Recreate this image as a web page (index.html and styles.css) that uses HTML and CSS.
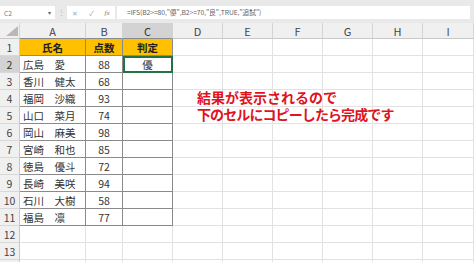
FILE: index.html
```html
<!DOCTYPE html>
<html lang="ja">
<head>
    <meta charset="UTF-8">
    <title>IFS関数</title>
    <link rel="stylesheet" href="styles.css">
</head>
<body>
    <div class="fbar">
        <div class="namebox"><span>C2</span><span class="arrow">▾</span></div>
        <div class="dots">⋮</div>
        <div class="fbtns"><span>✕</span><span>✓</span><span class="fx">fx</span></div>
        <div class="formula">=IFS(B2&gt;=80,"優",B2&gt;=70,"良",TRUE,"追試")</div>
    </div>

    <table class="sheet">
        <colgroup>
            <col class="c-rh"><col class="c-a"><col class="c-b"><col class="c-c">
            <col class="c-n"><col class="c-n"><col class="c-n"><col class="c-n"><col class="c-n"><col class="c-last">
        </colgroup>
        <tr class="colhead">
            <th class="corner"><svg width="20" height="15" viewBox="0 0 20 15"><polygon points="18,3 18,13 6,13" fill="#b8b8b8"/></svg></th>
            <th class="tb">A</th><th class="tb">B</th><th class="tb sel">C</th>
            <th>D</th><th>E</th><th>F</th><th>G</th><th>H</th><th>I</th>
        </tr>
        <tr>
            <th class="rh">1</th>
            <td class="t head">氏名</td><td class="t head">点数</td><td class="t head">判定</td>
            <td></td><td></td><td></td><td></td><td></td><td></td>
        </tr>
        <tr>
            <th class="rh sel">2</th>
            <td class="t name">広島　愛</td><td class="t num">88</td><td class="t num active">優</td>
            <td></td><td></td><td></td><td></td><td></td><td></td>
        </tr>
        <tr>
            <th class="rh">3</th>
            <td class="t name">香川　健太</td><td class="t num">68</td><td class="t"></td>
            <td></td><td></td><td></td><td></td><td></td><td></td>
        </tr>
        <tr>
            <th class="rh">4</th>
            <td class="t name">福岡　沙織</td><td class="t num">93</td><td class="t"></td>
            <td></td><td></td><td></td><td></td><td></td><td></td>
        </tr>
        <tr>
            <th class="rh">5</th>
            <td class="t name">山口　菜月</td><td class="t num">74</td><td class="t"></td>
            <td></td><td></td><td></td><td></td><td></td><td></td>
        </tr>
        <tr>
            <th class="rh">6</th>
            <td class="t name">岡山　麻美</td><td class="t num">98</td><td class="t"></td>
            <td></td><td></td><td></td><td></td><td></td><td></td>
        </tr>
        <tr>
            <th class="rh">7</th>
            <td class="t name">宮崎　和也</td><td class="t num">85</td><td class="t"></td>
            <td></td><td></td><td></td><td></td><td></td><td></td>
        </tr>
        <tr>
            <th class="rh">8</th>
            <td class="t name">徳島　優斗</td><td class="t num">72</td><td class="t"></td>
            <td></td><td></td><td></td><td></td><td></td><td></td>
        </tr>
        <tr>
            <th class="rh">9</th>
            <td class="t name">長崎　美咲</td><td class="t num">94</td><td class="t"></td>
            <td></td><td></td><td></td><td></td><td></td><td></td>
        </tr>
        <tr>
            <th class="rh">10</th>
            <td class="t name">石川　大樹</td><td class="t num">58</td><td class="t"></td>
            <td></td><td></td><td></td><td></td><td></td><td></td>
        </tr>
        <tr>
            <th class="rh">11</th>
            <td class="t name">福島　凛</td><td class="t num">77</td><td class="t"></td>
            <td></td><td></td><td></td><td></td><td></td><td></td>
        </tr>
        <tr>
            <th class="rh">12</th>
            <td></td><td></td><td></td><td></td><td></td><td></td><td></td><td></td><td></td>
        </tr>
        <tr>
            <th class="rh">13</th>
            <td></td><td></td><td></td><td></td><td></td><td></td><td></td><td></td><td></td>
        </tr>
        <tr>
            <th class="rh"></th>
            <td></td><td></td><td></td><td></td><td></td><td></td><td></td><td></td><td></td>
        </tr>
    </table>

    <div class="note">
        <div>結果が表示されるので</div>
        <div class="l2">下のセルにコピーしたら完成です</div>
    </div>
</body>
</html>
```

FILE: styles.css
```css
body {
    margin: 0;
    width: 474px;
    height: 262px;
    overflow: hidden;
    position: relative;
    background: #e9e9e9;
    font-family: "Noto Sans CJK JP", "Noto Sans", sans-serif;
}

/* formula bar */
.fbar {
    display: flex;
    height: 13px;
    padding: 6px 0 4px 0;
    font-size: 6.5px;
    color: #777;
}
.namebox {
    width: 55px;
    background: #fff;
    display: flex;
    justify-content: space-between;
    align-items: center;
    padding: 0 4px 0 4px;
    box-sizing: border-box;
}
.namebox .arrow {
    font-size: 6px;
    color: #666;
}
.dots {
    width: 12px;
    text-align: center;
    line-height: 13px;
    color: #aaa;
}
.fbtns {
    width: 48px;
    background: #fff;
    display: flex;
    justify-content: space-around;
    align-items: center;
    color: #aaa;
    font-size: 7px;
}
.fbtns .fx {
    font-style: italic;
    font-family: "Liberation Serif", serif;
    color: #777;
}
.formula {
    flex: 1;
    margin: 0 4px 0 2px;
    background: #fff;
    padding-left: 10px;
    line-height: 13px;
    font-size: 6.8px;
    letter-spacing: -0.1px;
    color: #666;
    white-space: nowrap;
}

/* sheet */
.sheet {
    table-layout: fixed;
    width: 474px;
    border-collapse: separate;
    border-spacing: 0;
    background: #fff;
    font-size: 10.5px;
    color: #333;
}
.c-rh { width: 20px; }
.c-a { width: 66px; }
.c-b { width: 37px; }
.c-c { width: 50px; }
.c-n { width: 50px; }
.c-last { width: 51px; }

.sheet th,
.sheet td {
    box-sizing: border-box;
    height: 17px;
    padding: 0;
    border-right: 1px solid #e2e2e2;
    border-bottom: 1px solid #e2e2e2;
    white-space: nowrap;
    overflow: hidden;
    line-height: 15px;
}
.colhead th {
    height: 15px;
    background: #f0f0f0;
    font-weight: normal;
    font-size: 11px;
    color: #444;
    line-height: 14px;
    border-right: 1px solid #d4d4d4;
    border-bottom: 1px solid #c8c8c8;
}
.colhead th.tb {
    border-bottom-color: #8a8a8a;
}
.colhead .corner {
    vertical-align: bottom;
}
.corner svg {
    display: block;
}
.rh {
    background: #f0f0f0;
    font-weight: normal;
    font-size: 10.5px;
    color: #444;
    text-align: center;
    border-right-color: #c8c8c8 !important;
    border-bottom-color: #d8d8d8 !important;
}
.sheet th.sel {
    background: #d3d3d3;
    color: #333;
}

.sheet td.t {
    border-right-color: #8a8a8a;
    border-bottom-color: #8a8a8a;
}
.sheet td.head {
    background: #ffc000;
    font-weight: bold;
    text-align: center;
    color: #222;
}
.name {
    padding-left: 3px !important;
}
.num {
    text-align: center;
}
.active {
    outline: 2px solid #217346;
    outline-offset: -2px;
}

/* callout text */
.note {
    position: absolute;
    left: 197px;
    top: 89px;
    font-size: 14px;
    line-height: 17px;
    font-weight: bold;
    color: #e0141e;
    white-space: nowrap;
}
.note .l2 {
    letter-spacing: -0.9px;
}
```
